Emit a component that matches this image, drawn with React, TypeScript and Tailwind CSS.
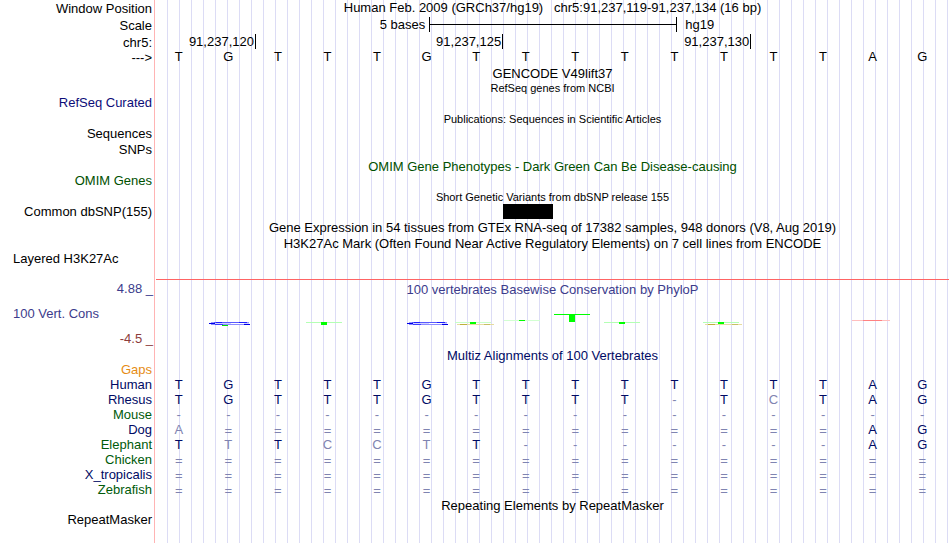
import type { ReactNode } from 'react';
import clsx from 'clsx';

const SEQUENCE = 'TGTTTGTTTTTTTTAG';

// lower case marks a base that differs from human
const SPECIES = [
  { name: 'Human', color: 'text-[#000a64]', bases: 'TGTTTGTTTTTTTTAG' },
  { name: 'Rhesus', color: 'text-[#000a64]', bases: 'TGTTTGTTTT-TcTAG' },
  { name: 'Mouse', color: 'text-[#005a0a]', bases: '----------------' },
  { name: 'Dog', color: 'text-[#000a64]', bases: 'a=============AG' },
  { name: 'Elephant', color: 'text-[#005a0a]', bases: 'TtTcctT-------AG' },
  { name: 'Chicken', color: 'text-[#005a0a]', bases: '================' },
  { name: 'X_tropicalis', color: 'text-[#000a64]', bases: '================' },
  { name: 'Zebrafish', color: 'text-[#005a0a]', bases: '================' },
];

interface RowProps {
  label?: string;
  labelClass?: string;
  className?: string;
  children?: ReactNode;
}

function Row({ label, labelClass = 'leading-[15px]', className = 'h-[15px]', children }: RowProps) {
  return (
    <div className={clsx('flex', className)}>
      <div className={clsx('w-[155px] shrink-0 pr-[3px] text-right', labelClass)}>{label}</div>
      <div className="min-w-0 flex-1">{children}</div>
    </div>
  );
}

function Title({ small, className, children }: { small?: boolean; className?: string; children: ReactNode }) {
  return (
    <p className={clsx('text-center whitespace-pre', small && 'text-[11px] leading-[15px]', className)}>
      {children}
    </p>
  );
}

function ScaleBar() {
  return (
    <div className="flex">
      <span className="w-[34.5%] pr-1 text-right">5 bases</span>
      <span className="flex w-[31.2%] items-center border-x border-black">
        <span className="h-px w-full bg-black" />
      </span>
      <span className="pl-2">hg19</span>
    </div>
  );
}

function Ruler() {
  return (
    <div className="flex text-right">
      <span className="w-[12.7%] border-r border-black pr-px">91,237,120</span>
      <span className="w-[31.1%] border-r border-black pr-px">91,237,125</span>
      <span className="w-[31.2%] border-r border-black pr-px">91,237,130</span>
    </div>
  );
}

function Alignment() {
  return (
    <table className="block w-full">
      <tbody className="block">
        {SPECIES.map(({ name, color, bases }) => (
          <tr key={name} className="flex h-[15px] pr-[3px] leading-[13px]">
            <th scope="row" className={clsx('w-[154px] shrink-0 pr-0.5 text-right font-normal', color)}>
              {name}
            </th>
            {bases.split('').map((base, i) => (
              <td
                key={i}
                className={clsx(
                  'flex-1 text-center',
                  /[A-Z]/.test(base) ? 'text-[#000a64]' : 'text-[#7f84b1]',
                  base === '=' && 'leading-[15px]',
                )}
              >
                {base.toUpperCase()}
              </td>
            ))}
          </tr>
        ))}
      </tbody>
    </table>
  );
}

// a base squashed to its score: wide arms and a short stem
function LogoT({ x, y, stem, arms }: { x: number; y: number; stem: number; arms: string }) {
  return (
    <>
      <rect x={x} y={y} width="36" height="1" fill={arms} />
      <rect x={x + 15} y={y} width="6" height={stem} fill="#00ff00" />
    </>
  );
}

function LogoG({ x }: { x: number }) {
  return (
    <>
      <rect x={x + 2} y="42" width="38" height="1" fill="#9696ff" />
      <rect x={x + 5} y="42" width="32" height="1" fill="#5a5aff" />
      <rect x={x + 7} y="42" width="6" height="1" fill="#1e1eff" />
      <rect x={x + 30} y="42" width="8" height="1" fill="#1e1eff" />
      <rect x={x} y="43" width="6" height="1" fill="#0000e6" />
      <rect x={x + 6} y="43" width="34" height="1" fill="#d2d2ff" />
      <rect x={x + 22} y="43" width="13" height="1" fill="#ffffff" />
      <rect x={x + 2} y="44" width="33" height="1" fill="#8c8cff" />
      <rect x={x + 6} y="44" width="8" height="1" fill="#3c3cff" />
      <rect x={x + 35} y="44" width="6" height="1" fill="#0000e6" />
    </>
  );
}

function LogoC({ x }: { x: number }) {
  return (
    <>
      <rect x={x} y="44" width="37" height="1" fill="#e6dca0" />
      <rect x={x + 3} y="44" width="7" height="1" fill="#beaf3c" />
      <rect x={x + 27} y="44" width="6" height="1" fill="#c8be64" />
    </>
  );
}

function ConservationLogo() {
  return (
    <svg
      className="block h-[30px] w-full"
      viewBox="155 17 795 30"
      preserveAspectRatio="none"
      shapeRendering="crispEdges"
      aria-hidden="true"
    >
      <LogoG x={209} />
      <rect x="222" y="45" width="6" height="1" fill="#00dc00" />
      <LogoT x={306} y={42} stem={3} arms="#b4ffb4" />
      <LogoG x={407} />
      <LogoT x={455} y={42} stem={2} arms="#c8ffc8" />
      <LogoC x={457} />
      <LogoT x={504} y={40} stem={1} arms="#d2ffd2" />
      <LogoT x={554} y={34} stem={8} arms="#00ff00" />
      <LogoT x={604} y={42} stem={2} arms="#b4ffb4" />
      <LogoT x={703} y={42} stem={2} arms="#b4ffb4" />
      <LogoC x={705} />
      <rect x="852" y="40" width="38" height="1" fill="#ffbebe" />
      <rect x="863" y="40" width="19" height="1" fill="#ff8282" />
    </svg>
  );
}

export default function App() {
  return (
    <main className="grid min-h-screen bg-white font-['Liberation_Sans',Arial,sans-serif] text-[13px] leading-[15px] text-black">
      <div className="col-start-1 row-start-1 ml-[154px] border-l border-[#ffb4b4] pl-px">
        <div className="h-full bg-[linear-gradient(to_right,transparent_11px,#dcdcf5_11px)] bg-[length:12px_100%]" />
      </div>

      <div className="col-start-1 row-start-1">
        <Row label="Window Position" className="h-[17px]" labelClass="leading-[17px]">
          <Title>{'Human Feb. 2009 (GRCh37/hg19)   chr5:91,237,119-91,237,134 (16 bp)'}</Title>
        </Row>
        <Row label="Scale" className="h-[17px]" labelClass="leading-[17px]">
          <ScaleBar />
        </Row>
        <Row label="chr5:" labelClass="leading-[17px]">
          <Ruler />
        </Row>
        <Row label="--->" className="h-[17px]" labelClass="leading-[17px]">
          <div className="-ml-px flex pr-[3px] text-center">
            {SEQUENCE.split('').map((base, i) => (
              <span key={i} className="flex-1">{base}</span>
            ))}
          </div>
        </Row>

        <Row><Title>GENCODE V49lift37</Title></Row>
        <Row><Title small>RefSeq genes from NCBI</Title></Row>
        <Row label="RefSeq Curated" className="h-4" labelClass="leading-[13px] text-[#0c0c78]" />
        <Row><Title small>Publications: Sequences in Scientific Articles</Title></Row>
        <Row label="Sequences" labelClass="leading-[13px]" />
        <Row label="SNPs" className="h-[17px]" />
        <Row><Title className="text-[#005000]">OMIM Gene Phenotypes - Dark Green Can Be Disease-causing</Title></Row>
        <Row label="OMIM Genes" className="h-4" labelClass="leading-[13px] text-[#005000]" />
        <Row className="h-[14px]"><Title small>Short Genetic Variants from dbSNP release 155</Title></Row>
        <Row label="Common dbSNP(155)" className="h-4">
          <div className="ml-[43.8%] h-[15px] w-[6.3%] bg-black" />
        </Row>
        <Row className="h-4">
          <Title>Gene Expression in 54 tissues from GTEx RNA-seq of 17382 samples, 948 donors (V8, Aug 2019)</Title>
        </Row>
        <Row>
          <Title>H3K27Ac Mark (Often Found Near Active Regulatory Elements) on 7 cell lines from ENCODE</Title>
        </Row>
        <p className="h-7 pl-[13px]">Layered H3K27Ac</p>

        <section className="flex h-[69px]">
          <div className="flex w-[155px] shrink-0 flex-col justify-between py-0.5 pr-0.5 text-right">
            <p className="text-[#3c3c8c]">4.88 _</p>
            <p className="pl-[13px] text-left text-[#3c3c8c]">100 Vert. Cons</p>
            <p className="text-[#8c3c3c]">-4.5 _</p>
          </div>
          <div className="min-w-0 flex-1">
            <hr className="mr-px ml-px border-t border-[#ff6464]" />
            <div className="pt-0.5">
              <Title className="text-[#3c3c8c]">100 vertebrates Basewise Conservation by PhyloP</Title>
              <ConservationLogo />
            </div>
          </div>
        </section>

        <Row><Title className="text-[#000a64]">Multiz Alignments of 100 Vertebrates</Title></Row>
        <Row label="Gaps" labelClass="leading-[13px] text-[#e68c14]" />
        <Alignment />
        <Row><Title>Repeating Elements by RepeatMasker</Title></Row>
        <Row label="RepeatMasker" labelClass="leading-[13px]" />
      </div>
    </main>
  );
}
